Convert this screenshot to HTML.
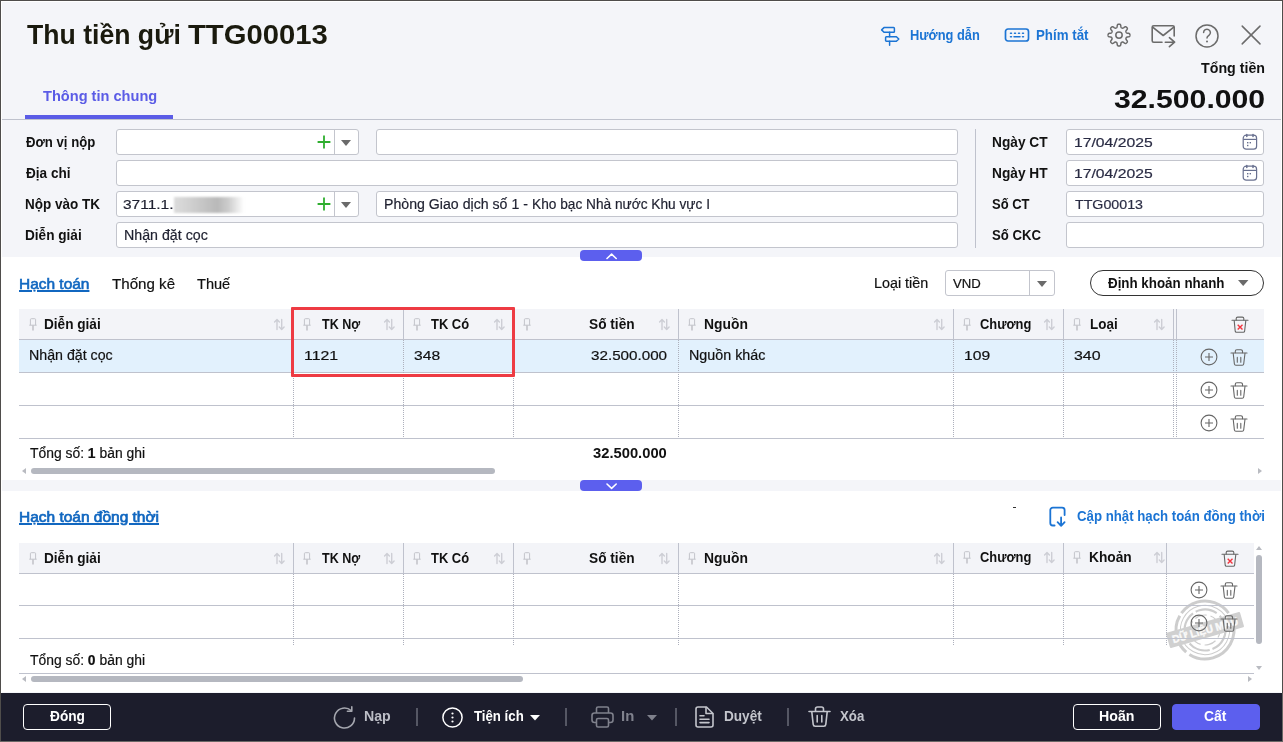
<!DOCTYPE html>
<html lang="vi">
<head>
<meta charset="utf-8">
<title>Thu tiền gửi TTG00013</title>
<style>
*{box-sizing:border-box;margin:0;padding:0}
html,body{width:1283px;height:742px;overflow:hidden}
body{font-family:"Liberation Sans","DejaVu Sans",sans-serif;font-size:14px;color:#111;background:#f4f5f9;position:relative}
.a{position:absolute}
.t{position:absolute;white-space:nowrap;line-height:18px;font-size:14px;color:#111;transform-origin:0 0}
.b{font-weight:bold}
.inp{position:absolute;background:#fff;border:1px solid #c3c5cd;border-radius:3px;height:26px}
.panel{position:absolute;background:#fff;left:2px;width:1279px}
.handle{position:absolute;left:580px;width:62px;height:11px;background:#5c5fee;border-radius:4px}


.vd{position:absolute;width:1px;background-image:linear-gradient(to bottom,#adb0bc 50%,transparent 50%);background-size:1px 2px}
.btn{position:absolute;height:26px;border-radius:4px;font-weight:bold;font-size:14px;line-height:24px;text-align:center;color:#fff;border:1px solid #fff}
svg{position:absolute;overflow:visible}
</style>
</head>
<body>
<div class="a" style="left:25px;top:115px;width:148px;height:4px;background:#5b5ce6;"></div>
<div class="a" style="left:1px;top:119px;width:1281px;height:1px;background:#bfc2cd;"></div>
<svg style="left:880px;top:25px" width="21" height="22" viewBox="0 0 21 22" fill="none"><g stroke="#1b74d4" stroke-width="1.5" stroke-linejoin="round" stroke-linecap="round"><path d="M4 2.6H13.6a.8 .8 0 0 1 .8 .8V6.4a.8 .8 0 0 1-.8 .8H4L1.6 4.9Z"/><path d="M9.6 7.2V11.7M9.6 16.3V20.3"/><path d="M6.4 11.7H16.4L18.8 14L16.4 16.3H6.4a.8 .8 0 0 1-.8-.8V12.5a.8 .8 0 0 1 .8-.8Z"/></g></svg>
<svg style="left:1004px;top:28px" width="26" height="14" viewBox="0 0 26 14" fill="none"><g stroke="#1b74d4" stroke-width="1.7" stroke-linecap="round"><rect x="1.5" y="1" width="23" height="12" rx="2.5"/><path d="M6.5 5.2h1M10.5 5.2h1M14.5 5.2h1M18.5 5.2h1M6.5 8.8h1M10 8.8h6M18.5 8.8h1" stroke-width="1.5"/></g></svg>
<svg style="left:1107px;top:23px" width="25" height="25" viewBox="0 0 25 25" fill="none"><path d="M12.00 1.20 L12.29 1.21 L12.57 1.24 L12.85 1.30 L13.12 1.41 L13.38 1.63 L13.60 2.01 L13.76 2.62 L13.86 3.34 L13.96 3.94 L14.08 4.34 L14.23 4.57 L14.40 4.71 L14.58 4.82 L14.76 4.91 L14.95 4.99 L15.13 5.06 L15.33 5.13 L15.53 5.18 L15.75 5.20 L16.02 5.14 L16.38 4.95 L16.88 4.59 L17.46 4.15 L18.00 3.84 L18.43 3.72 L18.76 3.75 L19.04 3.86 L19.28 4.02 L19.50 4.20 L19.71 4.39 L19.90 4.60 L20.08 4.82 L20.24 5.06 L20.35 5.34 L20.38 5.67 L20.26 6.10 L19.95 6.64 L19.51 7.22 L19.15 7.72 L18.96 8.08 L18.90 8.35 L18.92 8.57 L18.97 8.77 L19.04 8.97 L19.11 9.15 L19.19 9.34 L19.28 9.52 L19.39 9.70 L19.53 9.87 L19.76 10.02 L20.16 10.14 L20.76 10.24 L21.48 10.34 L22.09 10.50 L22.47 10.72 L22.69 10.98 L22.80 11.25 L22.86 11.53 L22.89 11.81 L22.90 12.10 L22.89 12.39 L22.86 12.67 L22.80 12.95 L22.69 13.22 L22.47 13.48 L22.09 13.70 L21.48 13.86 L20.76 13.96 L20.16 14.06 L19.76 14.18 L19.53 14.33 L19.39 14.50 L19.28 14.68 L19.19 14.86 L19.11 15.05 L19.04 15.23 L18.97 15.43 L18.92 15.63 L18.90 15.85 L18.96 16.12 L19.15 16.48 L19.51 16.98 L19.95 17.56 L20.26 18.10 L20.38 18.53 L20.35 18.86 L20.24 19.14 L20.08 19.38 L19.90 19.60 L19.71 19.81 L19.50 20.00 L19.28 20.18 L19.04 20.34 L18.76 20.45 L18.43 20.48 L18.00 20.36 L17.46 20.05 L16.88 19.61 L16.38 19.25 L16.02 19.06 L15.75 19.00 L15.53 19.02 L15.33 19.07 L15.13 19.14 L14.95 19.21 L14.76 19.29 L14.58 19.38 L14.40 19.49 L14.23 19.63 L14.08 19.86 L13.96 20.26 L13.86 20.86 L13.76 21.58 L13.60 22.19 L13.38 22.57 L13.12 22.79 L12.85 22.90 L12.57 22.96 L12.29 22.99 L12.00 23.00 L11.71 22.99 L11.43 22.96 L11.15 22.90 L10.88 22.79 L10.62 22.57 L10.40 22.19 L10.24 21.58 L10.14 20.86 L10.04 20.26 L9.92 19.86 L9.77 19.63 L9.60 19.49 L9.42 19.38 L9.24 19.29 L9.05 19.21 L8.87 19.14 L8.67 19.07 L8.47 19.02 L8.25 19.00 L7.98 19.06 L7.62 19.25 L7.12 19.61 L6.54 20.05 L6.00 20.36 L5.57 20.48 L5.24 20.45 L4.96 20.34 L4.72 20.18 L4.50 20.00 L4.29 19.81 L4.10 19.60 L3.92 19.38 L3.76 19.14 L3.65 18.86 L3.62 18.53 L3.74 18.10 L4.05 17.56 L4.49 16.98 L4.85 16.48 L5.04 16.12 L5.10 15.85 L5.08 15.63 L5.03 15.43 L4.96 15.23 L4.89 15.05 L4.81 14.86 L4.72 14.68 L4.61 14.50 L4.47 14.33 L4.24 14.18 L3.84 14.06 L3.24 13.96 L2.52 13.86 L1.91 13.70 L1.53 13.48 L1.31 13.22 L1.20 12.95 L1.14 12.67 L1.11 12.39 L1.10 12.10 L1.11 11.81 L1.14 11.53 L1.20 11.25 L1.31 10.98 L1.53 10.72 L1.91 10.50 L2.52 10.34 L3.24 10.24 L3.84 10.14 L4.24 10.02 L4.47 9.87 L4.61 9.70 L4.72 9.52 L4.81 9.34 L4.89 9.15 L4.96 8.97 L5.03 8.77 L5.08 8.57 L5.10 8.35 L5.04 8.08 L4.85 7.72 L4.49 7.22 L4.05 6.64 L3.74 6.10 L3.62 5.67 L3.65 5.34 L3.76 5.06 L3.92 4.82 L4.10 4.60 L4.29 4.39 L4.50 4.20 L4.72 4.02 L4.96 3.86 L5.24 3.75 L5.57 3.72 L6.00 3.84 L6.54 4.15 L7.12 4.59 L7.62 4.95 L7.98 5.14 L8.25 5.20 L8.47 5.18 L8.67 5.13 L8.87 5.06 L9.05 4.99 L9.24 4.91 L9.42 4.82 L9.60 4.71 L9.77 4.57 L9.92 4.34 L10.04 3.94 L10.14 3.34 L10.24 2.62 L10.40 2.01 L10.62 1.63 L10.88 1.41 L11.15 1.30 L11.43 1.24 L11.71 1.21Z" stroke="#6b6b6b" stroke-width="1.5" stroke-linejoin="round"/><circle cx="12" cy="12.1" r="3.2" stroke="#6b6b6b" stroke-width="1.5"/></svg>
<svg style="left:1151px;top:24px" width="26" height="24" viewBox="0 0 26 24" fill="none"><g stroke="#6b6b6b" stroke-width="1.6" stroke-linejoin="round" stroke-linecap="round"><path d="M11 18.2H2.7a1.5 1.5 0 0 1-1.5-1.5V3.3a1.5 1.5 0 0 1 1.5-1.5H21.7a1.5 1.5 0 0 1 1.5 1.5V11.9"/><path d="M1.6 3.2L12.2 11.5L22.8 3.2"/><path d="M14.3 18.2H23.6M18.4 13.7L23.6 18.2L18.4 22.7"/></g></svg>
<svg style="left:1195px;top:24px" width="25" height="25" viewBox="0 0 25 25" fill="none"><circle cx="12" cy="11.9" r="11" stroke="#6b6b6b" stroke-width="1.5"/><path d="M8.6 8.6a3.4 3.4 0 1 1 5.3 2.8c-1.4 .9-1.9 1.4-1.9 2.5" stroke="#6b6b6b" stroke-width="1.5" stroke-linecap="round"/><circle cx="12" cy="17.5" r="1" fill="#6b6b6b"/></svg>
<svg style="left:1241px;top:25px" width="21" height="21" viewBox="0 0 21 21" fill="none"><path d="M1.2 1.1L19 18.9M19 1.1L1.2 18.9" stroke="#6b6b6b" stroke-width="1.5" stroke-linecap="round"/></svg>
<div class="inp" style="left:116px;top:129px;width:243px"></div>
<div class="inp" style="left:376px;top:129px;width:582px"></div>
<div class="inp" style="left:116px;top:160px;width:842px"></div>
<div class="inp" style="left:116px;top:191px;width:243px"></div>
<div class="inp" style="left:376px;top:191px;width:582px"></div>
<div class="inp" style="left:116px;top:222px;width:842px"></div>
<div class="inp" style="left:1066px;top:129px;width:198px"></div>
<div class="inp" style="left:1066px;top:160px;width:198px"></div>
<div class="inp" style="left:1066px;top:191px;width:198px"></div>
<div class="inp" style="left:1066px;top:222px;width:198px"></div>
<div class="a" style="left:975px;top:129px;width:1px;height:119px;background:#bfc2cd;"></div>
<div class="a" style="left:174px;top:197px;width:70px;height:16px;background:linear-gradient(to right,#dcdcdc,#cfcfcf 25%,#b9b9b9 62%,#cdcdcd 78%,rgba(235,235,235,0));filter:blur(1.2px)"></div>
<div class="a" style="left:334px;top:130px;width:1px;height:24px;background:#c3c5cd;"></div>
<svg style="left:317px;top:135px" width="14" height="14" viewBox="0 0 14 14" fill="none"><path d="M7 .6v12.8M.6 7h12.8" stroke="#2fae2f" stroke-width="1.8"/></svg>
<svg style="left:341px;top:140px" width="10" height="6" viewBox="0 0 10 6" fill="none"><path d="M0 0h10l-5 6z" fill="#6a6a6a"/></svg>
<div class="a" style="left:334px;top:192px;width:1px;height:24px;background:#c3c5cd;"></div>
<svg style="left:317px;top:197px" width="14" height="14" viewBox="0 0 14 14" fill="none"><path d="M7 .6v12.8M.6 7h12.8" stroke="#2fae2f" stroke-width="1.8"/></svg>
<svg style="left:341px;top:202px" width="10" height="6" viewBox="0 0 10 6" fill="none"><path d="M0 0h10l-5 6z" fill="#6a6a6a"/></svg>
<svg style="left:1242px;top:133px" width="16" height="17" viewBox="0 0 16 17" fill="none"><g stroke="#68708f" stroke-width="1.2"><rect x="1.2" y="2.2" width="13.4" height="14" rx="3"/><path d="M1.2 6.4h13.4"/><path d="M4.8 1.6v1.8M11 1.6v1.8" stroke-linecap="round" stroke-width="1.5"/></g><rect x="5" y="9" width="1.4" height="1.4" fill="#68708f"/><rect x="7.6" y="9" width="1.4" height="1.4" fill="#68708f"/><rect x="5" y="11.8" width="1.4" height="1.4" fill="#68708f"/></svg>
<svg style="left:1242px;top:164px" width="16" height="17" viewBox="0 0 16 17" fill="none"><g stroke="#68708f" stroke-width="1.2"><rect x="1.2" y="2.2" width="13.4" height="14" rx="3"/><path d="M1.2 6.4h13.4"/><path d="M4.8 1.6v1.8M11 1.6v1.8" stroke-linecap="round" stroke-width="1.5"/></g><rect x="5" y="9" width="1.4" height="1.4" fill="#68708f"/><rect x="7.6" y="9" width="1.4" height="1.4" fill="#68708f"/><rect x="5" y="11.8" width="1.4" height="1.4" fill="#68708f"/></svg>
<div class="panel" style="top:257px;height:223px"></div>
<div class="handle" style="top:250px"></div>
<svg style="left:606px;top:252.6px" width="11" height="7" viewBox="0 0 11 7" fill="none"><path d="M1 5.5l4.6-4.3 4.6 4.3" stroke="#fff" stroke-width="1.6" stroke-linecap="round" stroke-linejoin="round"/></svg>
<div class="inp" style="left:945px;top:270px;width:110px"></div>
<div class="a" style="left:1029px;top:271px;width:1px;height:24px;background:#c3c5cd;"></div>
<svg style="left:1037px;top:281px" width="10" height="6" viewBox="0 0 10 6" fill="none"><path d="M0 0h10l-5 6z" fill="#6a6a6a"/></svg>
<div class="a" style="left:1090px;top:270px;width:174px;height:26px;border:1px solid #333;border-radius:13px;background:#fff"></div>
<svg style="left:1238px;top:280px" width="10" height="6" viewBox="0 0 10 6" fill="none"><path d="M0 0h10.4l-5.2 6z" fill="#6a6a6a"/></svg>
<div class="a" style="left:19px;top:309px;width:1245px;height:30px;background:#f3f4f8;"></div>
<div class="a" style="left:19px;top:339px;width:1245px;height:1px;background:#bfc2cd;"></div>
<svg style="left:29px;top:318px" width="8" height="13" viewBox="0 0 8 13" fill="none"><g stroke="#c3c4ca" stroke-width="1"><path d="M1.4 7.2V1.6a.9 .9 0 0 1 .9-.9h3.4a.9 .9 0 0 1 .9 .9V7.2"/><path d="M.3 7.2H7.7"/><path d="M4 7.2V12.5" stroke-width="1.6"/></g></svg>
<svg style="left:274px;top:319px" width="11" height="11" viewBox="0 0 11 11" fill="none"><g stroke="#cdced5" stroke-width="1.4" stroke-linecap="round" stroke-linejoin="round"><path d="M3 10.5V.7M.6 3L3 .6L5.4 3"/><path d="M7.7 .5V10.4M5.3 8L7.7 10.4L10.1 8"/></g></svg>
<svg style="left:303px;top:318px" width="8" height="13" viewBox="0 0 8 13" fill="none"><g stroke="#c3c4ca" stroke-width="1"><path d="M1.4 7.2V1.6a.9 .9 0 0 1 .9-.9h3.4a.9 .9 0 0 1 .9 .9V7.2"/><path d="M.3 7.2H7.7"/><path d="M4 7.2V12.5" stroke-width="1.6"/></g></svg>
<svg style="left:384px;top:319px" width="11" height="11" viewBox="0 0 11 11" fill="none"><g stroke="#cdced5" stroke-width="1.4" stroke-linecap="round" stroke-linejoin="round"><path d="M3 10.5V.7M.6 3L3 .6L5.4 3"/><path d="M7.7 .5V10.4M5.3 8L7.7 10.4L10.1 8"/></g></svg>
<div class="a" style="left:293px;top:309px;width:1px;height:30px;background:#bfc2cd;"></div>
<svg style="left:413px;top:318px" width="8" height="13" viewBox="0 0 8 13" fill="none"><g stroke="#c3c4ca" stroke-width="1"><path d="M1.4 7.2V1.6a.9 .9 0 0 1 .9-.9h3.4a.9 .9 0 0 1 .9 .9V7.2"/><path d="M.3 7.2H7.7"/><path d="M4 7.2V12.5" stroke-width="1.6"/></g></svg>
<svg style="left:494px;top:319px" width="11" height="11" viewBox="0 0 11 11" fill="none"><g stroke="#cdced5" stroke-width="1.4" stroke-linecap="round" stroke-linejoin="round"><path d="M3 10.5V.7M.6 3L3 .6L5.4 3"/><path d="M7.7 .5V10.4M5.3 8L7.7 10.4L10.1 8"/></g></svg>
<div class="a" style="left:403px;top:309px;width:1px;height:30px;background:#bfc2cd;"></div>
<svg style="left:523px;top:318px" width="8" height="13" viewBox="0 0 8 13" fill="none"><g stroke="#c3c4ca" stroke-width="1"><path d="M1.4 7.2V1.6a.9 .9 0 0 1 .9-.9h3.4a.9 .9 0 0 1 .9 .9V7.2"/><path d="M.3 7.2H7.7"/><path d="M4 7.2V12.5" stroke-width="1.6"/></g></svg>
<svg style="left:659px;top:319px" width="11" height="11" viewBox="0 0 11 11" fill="none"><g stroke="#cdced5" stroke-width="1.4" stroke-linecap="round" stroke-linejoin="round"><path d="M3 10.5V.7M.6 3L3 .6L5.4 3"/><path d="M7.7 .5V10.4M5.3 8L7.7 10.4L10.1 8"/></g></svg>
<div class="a" style="left:513px;top:309px;width:1px;height:30px;background:#bfc2cd;"></div>
<svg style="left:688px;top:318px" width="8" height="13" viewBox="0 0 8 13" fill="none"><g stroke="#c3c4ca" stroke-width="1"><path d="M1.4 7.2V1.6a.9 .9 0 0 1 .9-.9h3.4a.9 .9 0 0 1 .9 .9V7.2"/><path d="M.3 7.2H7.7"/><path d="M4 7.2V12.5" stroke-width="1.6"/></g></svg>
<svg style="left:934px;top:319px" width="11" height="11" viewBox="0 0 11 11" fill="none"><g stroke="#cdced5" stroke-width="1.4" stroke-linecap="round" stroke-linejoin="round"><path d="M3 10.5V.7M.6 3L3 .6L5.4 3"/><path d="M7.7 .5V10.4M5.3 8L7.7 10.4L10.1 8"/></g></svg>
<div class="a" style="left:678px;top:309px;width:1px;height:30px;background:#bfc2cd;"></div>
<svg style="left:963px;top:318px" width="8" height="13" viewBox="0 0 8 13" fill="none"><g stroke="#c3c4ca" stroke-width="1"><path d="M1.4 7.2V1.6a.9 .9 0 0 1 .9-.9h3.4a.9 .9 0 0 1 .9 .9V7.2"/><path d="M.3 7.2H7.7"/><path d="M4 7.2V12.5" stroke-width="1.6"/></g></svg>
<svg style="left:1044px;top:319px" width="11" height="11" viewBox="0 0 11 11" fill="none"><g stroke="#cdced5" stroke-width="1.4" stroke-linecap="round" stroke-linejoin="round"><path d="M3 10.5V.7M.6 3L3 .6L5.4 3"/><path d="M7.7 .5V10.4M5.3 8L7.7 10.4L10.1 8"/></g></svg>
<div class="a" style="left:953px;top:309px;width:1px;height:30px;background:#bfc2cd;"></div>
<svg style="left:1073px;top:318px" width="8" height="13" viewBox="0 0 8 13" fill="none"><g stroke="#c3c4ca" stroke-width="1"><path d="M1.4 7.2V1.6a.9 .9 0 0 1 .9-.9h3.4a.9 .9 0 0 1 .9 .9V7.2"/><path d="M.3 7.2H7.7"/><path d="M4 7.2V12.5" stroke-width="1.6"/></g></svg>
<svg style="left:1154px;top:319px" width="11" height="11" viewBox="0 0 11 11" fill="none"><g stroke="#cdced5" stroke-width="1.4" stroke-linecap="round" stroke-linejoin="round"><path d="M3 10.5V.7M.6 3L3 .6L5.4 3"/><path d="M7.7 .5V10.4M5.3 8L7.7 10.4L10.1 8"/></g></svg>
<div class="a" style="left:1063px;top:309px;width:1px;height:30px;background:#bfc2cd;"></div>
<div class="a" style="left:1173px;top:309px;width:1px;height:30px;background:#bfc2cd;"></div>
<div class="a" style="left:1176px;top:309px;width:1px;height:30px;background:#bfc2cd;"></div>
<div class="a" style="left:19px;top:340px;width:1245px;height:32px;background:#e2f1fd;"></div>
<div class="a" style="left:19px;top:372px;width:1245px;height:1px;background:#bfc2cd;"></div>
<div class="a" style="left:19px;top:405px;width:1245px;height:1px;background:#bfc2cd;"></div>
<div class="a" style="left:19px;top:438px;width:1245px;height:1px;background:#bfc2cd;"></div>
<div class="vd" style="left:293px;top:340px;height:98px"></div>
<div class="vd" style="left:403px;top:340px;height:98px"></div>
<div class="vd" style="left:513px;top:340px;height:98px"></div>
<div class="vd" style="left:678px;top:340px;height:98px"></div>
<div class="vd" style="left:953px;top:340px;height:98px"></div>
<div class="vd" style="left:1063px;top:340px;height:98px"></div>
<div class="vd" style="left:1173px;top:340px;height:98px"></div>
<div class="vd" style="left:1176px;top:340px;height:98px"></div>
<svg style="left:1231px;top:316px" width="18" height="17" viewBox="0 0 18 17" fill="none"><g stroke="#666" stroke-width="1.1" stroke-linecap="round" stroke-linejoin="round"><path d="M1 4.3H17"/><path d="M5.2 4.1V2.6a1.5 1.5 0 0 1 1.5-1.5h4.6a1.5 1.5 0 0 1 1.5 1.5V4.1"/><path d="M3.2 4.6L4.2 15.2a1.3 1.3 0 0 0 1.3 1.1h6.8a1.3 1.3 0 0 0 1.3-1.1L14.8 4.6"/></g><path d="M6.7 8.7l4.8 4.8M11.5 8.7l-4.8 4.8" stroke="#f2353f" stroke-width="1.4"/></svg>
<svg style="left:1199.5px;top:348px" width="18" height="18" viewBox="0 0 18 18" fill="none"><circle cx="9" cy="9" r="7.9" stroke="#666" stroke-width="1.1"/><path d="M9 5v8M5 9h8" stroke="#666" stroke-width="1.1"/></svg>
<svg style="left:1230px;top:348.5px" width="18" height="17" viewBox="0 0 18 17" fill="none"><g stroke="#666" stroke-width="1.1" stroke-linecap="round" stroke-linejoin="round"><path d="M1 4H17"/><path d="M5.3 3.8V2.3a1.5 1.5 0 0 1 1.5-1.5h4.2a1.5 1.5 0 0 1 1.5 1.5V3.8"/><path d="M3.2 4.3L4.4 15a1.5 1.5 0 0 0 1.5 1.3h6.3a1.5 1.5 0 0 0 1.5-1.3L15 4.3"/><path d="M7.3 8.4v4.8M10.8 8.4v4.8"/></g></svg>
<svg style="left:1199.5px;top:381px" width="18" height="18" viewBox="0 0 18 18" fill="none"><circle cx="9" cy="9" r="7.9" stroke="#666" stroke-width="1.1"/><path d="M9 5v8M5 9h8" stroke="#666" stroke-width="1.1"/></svg>
<svg style="left:1230px;top:381.5px" width="18" height="17" viewBox="0 0 18 17" fill="none"><g stroke="#666" stroke-width="1.1" stroke-linecap="round" stroke-linejoin="round"><path d="M1 4H17"/><path d="M5.3 3.8V2.3a1.5 1.5 0 0 1 1.5-1.5h4.2a1.5 1.5 0 0 1 1.5 1.5V3.8"/><path d="M3.2 4.3L4.4 15a1.5 1.5 0 0 0 1.5 1.3h6.3a1.5 1.5 0 0 0 1.5-1.3L15 4.3"/><path d="M7.3 8.4v4.8M10.8 8.4v4.8"/></g></svg>
<svg style="left:1199.5px;top:414px" width="18" height="18" viewBox="0 0 18 18" fill="none"><circle cx="9" cy="9" r="7.9" stroke="#666" stroke-width="1.1"/><path d="M9 5v8M5 9h8" stroke="#666" stroke-width="1.1"/></svg>
<svg style="left:1230px;top:414.5px" width="18" height="17" viewBox="0 0 18 17" fill="none"><g stroke="#666" stroke-width="1.1" stroke-linecap="round" stroke-linejoin="round"><path d="M1 4H17"/><path d="M5.3 3.8V2.3a1.5 1.5 0 0 1 1.5-1.5h4.2a1.5 1.5 0 0 1 1.5 1.5V3.8"/><path d="M3.2 4.3L4.4 15a1.5 1.5 0 0 0 1.5 1.3h6.3a1.5 1.5 0 0 0 1.5-1.3L15 4.3"/><path d="M7.3 8.4v4.8M10.8 8.4v4.8"/></g></svg>
<div class="a" style="left:31px;top:468px;width:464px;height:6px;background:#b5b8c0;border-radius:3px"></div>
<svg style="left:22px;top:468px" width="4" height="6" viewBox="0 0 4 6" fill="none"><path d="M4 0v6l-4-3z" fill="#b9bbc1"/></svg>
<svg style="left:1258px;top:468px" width="4" height="6" viewBox="0 0 4 6" fill="none"><path d="M0 0v6l4-3z" fill="#b9bbc1"/></svg>
<div class="a" style="left:291px;top:307px;width:224px;height:70px;border:3px solid #ee3b43;border-radius:1px"></div>
<div class="handle" style="top:480px"></div>
<svg style="left:606px;top:483px" width="11" height="7" viewBox="0 0 11 7" fill="none"><path d="M1 1l4.6 4.3 4.6-4.3" stroke="#fff" stroke-width="1.6" stroke-linecap="round" stroke-linejoin="round"/></svg>
<div class="panel" style="top:491px;height:201px"></div>
<svg style="left:1165px;top:590px" width="80" height="80" viewBox="-40 -40 80 80" fill="none"><g transform="rotate(-16)"><circle r="29" stroke="#cdcdcd" stroke-width="3" stroke-dasharray="70 4 40 3 55 5"/><circle r="24.6" stroke="#cdcdcd" stroke-width="1"/><circle r="20.5" stroke="#cdcdcd" stroke-width="2.2" stroke-dasharray="30 3 22 4"/><circle r="15" stroke="#cdcdcd" stroke-width="1.2" stroke-dasharray="12 4"/><rect x="-38.5" y="-8" width="77" height="16" rx="1" fill="#d0d0d0"/><text x="0" y="4" text-anchor="middle" font-family="Liberation Sans, sans-serif" font-weight="bold" font-size="11" fill="#fafafa" stroke="#fafafa" stroke-width="0.4" textLength="68" lengthAdjust="spacingAndGlyphs">DỮ LIỆU MẪU</text></g></svg>
<svg style="left:1048px;top:506px" width="19" height="22" viewBox="0 0 19 22" fill="none"><g stroke="#1b74d4" stroke-width="1.8" stroke-linecap="round" stroke-linejoin="round"><path d="M6.6 19.5H4.8a2.5 2.5 0 0 1-2.5-2.5V4.1a2.5 2.5 0 0 1 2.5-2.5H14.1a2.5 2.5 0 0 1 2.5 2.5V9.1"/><path d="M13.1 11.5V19.8M9.6 16.2L13.1 19.8L16.6 16.2"/></g></svg>
<div class="a" style="left:1013px;top:507px;width:3px;height:1px;background:#333;"></div>
<div class="a" style="left:19px;top:543px;width:1235px;height:30px;background:#f3f4f8;"></div>
<div class="a" style="left:19px;top:573px;width:1235px;height:1px;background:#bfc2cd;"></div>
<svg style="left:29px;top:552px" width="8" height="13" viewBox="0 0 8 13" fill="none"><g stroke="#c3c4ca" stroke-width="1"><path d="M1.4 7.2V1.6a.9 .9 0 0 1 .9-.9h3.4a.9 .9 0 0 1 .9 .9V7.2"/><path d="M.3 7.2H7.7"/><path d="M4 7.2V12.5" stroke-width="1.6"/></g></svg>
<svg style="left:274px;top:553px" width="11" height="11" viewBox="0 0 11 11" fill="none"><g stroke="#cdced5" stroke-width="1.4" stroke-linecap="round" stroke-linejoin="round"><path d="M3 10.5V.7M.6 3L3 .6L5.4 3"/><path d="M7.7 .5V10.4M5.3 8L7.7 10.4L10.1 8"/></g></svg>
<svg style="left:303px;top:552px" width="8" height="13" viewBox="0 0 8 13" fill="none"><g stroke="#c3c4ca" stroke-width="1"><path d="M1.4 7.2V1.6a.9 .9 0 0 1 .9-.9h3.4a.9 .9 0 0 1 .9 .9V7.2"/><path d="M.3 7.2H7.7"/><path d="M4 7.2V12.5" stroke-width="1.6"/></g></svg>
<svg style="left:384px;top:553px" width="11" height="11" viewBox="0 0 11 11" fill="none"><g stroke="#cdced5" stroke-width="1.4" stroke-linecap="round" stroke-linejoin="round"><path d="M3 10.5V.7M.6 3L3 .6L5.4 3"/><path d="M7.7 .5V10.4M5.3 8L7.7 10.4L10.1 8"/></g></svg>
<div class="a" style="left:293px;top:543px;width:1px;height:30px;background:#bfc2cd;"></div>
<svg style="left:413px;top:552px" width="8" height="13" viewBox="0 0 8 13" fill="none"><g stroke="#c3c4ca" stroke-width="1"><path d="M1.4 7.2V1.6a.9 .9 0 0 1 .9-.9h3.4a.9 .9 0 0 1 .9 .9V7.2"/><path d="M.3 7.2H7.7"/><path d="M4 7.2V12.5" stroke-width="1.6"/></g></svg>
<svg style="left:494px;top:553px" width="11" height="11" viewBox="0 0 11 11" fill="none"><g stroke="#cdced5" stroke-width="1.4" stroke-linecap="round" stroke-linejoin="round"><path d="M3 10.5V.7M.6 3L3 .6L5.4 3"/><path d="M7.7 .5V10.4M5.3 8L7.7 10.4L10.1 8"/></g></svg>
<div class="a" style="left:403px;top:543px;width:1px;height:30px;background:#bfc2cd;"></div>
<svg style="left:523px;top:552px" width="8" height="13" viewBox="0 0 8 13" fill="none"><g stroke="#c3c4ca" stroke-width="1"><path d="M1.4 7.2V1.6a.9 .9 0 0 1 .9-.9h3.4a.9 .9 0 0 1 .9 .9V7.2"/><path d="M.3 7.2H7.7"/><path d="M4 7.2V12.5" stroke-width="1.6"/></g></svg>
<svg style="left:659px;top:553px" width="11" height="11" viewBox="0 0 11 11" fill="none"><g stroke="#cdced5" stroke-width="1.4" stroke-linecap="round" stroke-linejoin="round"><path d="M3 10.5V.7M.6 3L3 .6L5.4 3"/><path d="M7.7 .5V10.4M5.3 8L7.7 10.4L10.1 8"/></g></svg>
<div class="a" style="left:513px;top:543px;width:1px;height:30px;background:#bfc2cd;"></div>
<svg style="left:688px;top:552px" width="8" height="13" viewBox="0 0 8 13" fill="none"><g stroke="#c3c4ca" stroke-width="1"><path d="M1.4 7.2V1.6a.9 .9 0 0 1 .9-.9h3.4a.9 .9 0 0 1 .9 .9V7.2"/><path d="M.3 7.2H7.7"/><path d="M4 7.2V12.5" stroke-width="1.6"/></g></svg>
<svg style="left:934px;top:553px" width="11" height="11" viewBox="0 0 11 11" fill="none"><g stroke="#cdced5" stroke-width="1.4" stroke-linecap="round" stroke-linejoin="round"><path d="M3 10.5V.7M.6 3L3 .6L5.4 3"/><path d="M7.7 .5V10.4M5.3 8L7.7 10.4L10.1 8"/></g></svg>
<div class="a" style="left:678px;top:543px;width:1px;height:30px;background:#bfc2cd;"></div>
<svg style="left:963px;top:550.8px" width="8" height="13" viewBox="0 0 8 13" fill="none"><g stroke="#c3c4ca" stroke-width="1"><path d="M1.4 7.2V1.6a.9 .9 0 0 1 .9-.9h3.4a.9 .9 0 0 1 .9 .9V7.2"/><path d="M.3 7.2H7.7"/><path d="M4 7.2V12.5" stroke-width="1.6"/></g></svg>
<svg style="left:1044px;top:551.8px" width="11" height="11" viewBox="0 0 11 11" fill="none"><g stroke="#cdced5" stroke-width="1.4" stroke-linecap="round" stroke-linejoin="round"><path d="M3 10.5V.7M.6 3L3 .6L5.4 3"/><path d="M7.7 .5V10.4M5.3 8L7.7 10.4L10.1 8"/></g></svg>
<div class="a" style="left:953px;top:543px;width:1px;height:30px;background:#bfc2cd;"></div>
<svg style="left:1073px;top:550.8px" width="8" height="13" viewBox="0 0 8 13" fill="none"><g stroke="#c3c4ca" stroke-width="1"><path d="M1.4 7.2V1.6a.9 .9 0 0 1 .9-.9h3.4a.9 .9 0 0 1 .9 .9V7.2"/><path d="M.3 7.2H7.7"/><path d="M4 7.2V12.5" stroke-width="1.6"/></g></svg>
<svg style="left:1154px;top:551.8px" width="11" height="11" viewBox="0 0 11 11" fill="none"><g stroke="#cdced5" stroke-width="1.4" stroke-linecap="round" stroke-linejoin="round"><path d="M3 10.5V.7M.6 3L3 .6L5.4 3"/><path d="M7.7 .5V10.4M5.3 8L7.7 10.4L10.1 8"/></g></svg>
<div class="a" style="left:1063px;top:543px;width:1px;height:30px;background:#bfc2cd;"></div>
<div class="a" style="left:1166px;top:543px;width:1px;height:30px;background:#bfc2cd;"></div>
<div class="a" style="left:19px;top:605px;width:1235px;height:1px;background:#bfc2cd;"></div>
<div class="a" style="left:19px;top:638px;width:1235px;height:1px;background:#bfc2cd;"></div>
<div class="a" style="left:19px;top:673px;width:1235px;height:1px;background:#bfc2cd;"></div>
<div class="vd" style="left:293px;top:574px;height:72px"></div>
<div class="vd" style="left:403px;top:574px;height:72px"></div>
<div class="vd" style="left:513px;top:574px;height:72px"></div>
<div class="vd" style="left:678px;top:574px;height:72px"></div>
<div class="vd" style="left:953px;top:574px;height:72px"></div>
<div class="vd" style="left:1063px;top:574px;height:72px"></div>
<div class="vd" style="left:1166px;top:574px;height:72px"></div>
<svg style="left:1221px;top:550px" width="18" height="17" viewBox="0 0 18 17" fill="none"><g stroke="#666" stroke-width="1.1" stroke-linecap="round" stroke-linejoin="round"><path d="M1 4.3H17"/><path d="M5.2 4.1V2.6a1.5 1.5 0 0 1 1.5-1.5h4.6a1.5 1.5 0 0 1 1.5 1.5V4.1"/><path d="M3.2 4.6L4.2 15.2a1.3 1.3 0 0 0 1.3 1.1h6.8a1.3 1.3 0 0 0 1.3-1.1L14.8 4.6"/></g><path d="M6.7 8.7l4.8 4.8M11.5 8.7l-4.8 4.8" stroke="#f2353f" stroke-width="1.4"/></svg>
<svg style="left:1189.5px;top:581px" width="18" height="18" viewBox="0 0 18 18" fill="none"><circle cx="9" cy="9" r="7.9" stroke="#666" stroke-width="1.1"/><path d="M9 5v8M5 9h8" stroke="#666" stroke-width="1.1"/></svg>
<svg style="left:1220px;top:581.5px" width="18" height="17" viewBox="0 0 18 17" fill="none"><g stroke="#666" stroke-width="1.1" stroke-linecap="round" stroke-linejoin="round"><path d="M1 4H17"/><path d="M5.3 3.8V2.3a1.5 1.5 0 0 1 1.5-1.5h4.2a1.5 1.5 0 0 1 1.5 1.5V3.8"/><path d="M3.2 4.3L4.4 15a1.5 1.5 0 0 0 1.5 1.3h6.3a1.5 1.5 0 0 0 1.5-1.3L15 4.3"/><path d="M7.3 8.4v4.8M10.8 8.4v4.8"/></g></svg>
<svg style="left:1189.5px;top:614px" width="18" height="18" viewBox="0 0 18 18" fill="none"><circle cx="9" cy="9" r="7.9" stroke="#666" stroke-width="1.1"/><path d="M9 5v8M5 9h8" stroke="#666" stroke-width="1.1"/></svg>
<svg style="left:1220px;top:614.5px" width="18" height="17" viewBox="0 0 18 17" fill="none"><g stroke="#666" stroke-width="1.1" stroke-linecap="round" stroke-linejoin="round"><path d="M1 4H17"/><path d="M5.3 3.8V2.3a1.5 1.5 0 0 1 1.5-1.5h4.2a1.5 1.5 0 0 1 1.5 1.5V3.8"/><path d="M3.2 4.3L4.4 15a1.5 1.5 0 0 0 1.5 1.3h6.3a1.5 1.5 0 0 0 1.5-1.3L15 4.3"/><path d="M7.3 8.4v4.8M10.8 8.4v4.8"/></g></svg>
<div class="a" style="left:31px;top:676px;width:492px;height:6px;background:#b5b8c0;border-radius:3px"></div>
<svg style="left:22px;top:676px" width="4" height="6" viewBox="0 0 4 6" fill="none"><path d="M4 0v6l-4-3z" fill="#b9bbc1"/></svg>
<svg style="left:1248px;top:676px" width="4" height="6" viewBox="0 0 4 6" fill="none"><path d="M0 0v6l4-3z" fill="#b9bbc1"/></svg>
<div class="a" style="left:1256px;top:555px;width:6px;height:89px;background:#b5b8c0;border-radius:3px"></div>
<svg style="left:1256px;top:546px" width="6" height="4" viewBox="0 0 6 4" fill="none"><path d="M0 4h6l-3-4z" fill="#b9bbc1"/></svg>
<svg style="left:1256px;top:666px" width="6" height="4" viewBox="0 0 6 4" fill="none"><path d="M0 0h6l-3 4z" fill="#b9bbc1"/></svg>
<div class="a" style="left:0px;top:693px;width:1283px;height:49px;background:#1c1d2c;"></div>
<div class="btn" style="left:23px;top:704px;width:88px"></div>
<div class="btn" style="left:1073px;top:704px;width:88px"></div>
<div class="btn" style="left:1172px;top:704px;width:88px;background:#5c5fee;border-color:#5c5fee"></div>
<div class="a" style="left:416px;top:708px;width:2px;height:18px;background:#555764;"></div>
<div class="a" style="left:565px;top:708px;width:2px;height:18px;background:#555764;"></div>
<div class="a" style="left:675px;top:708px;width:2px;height:18px;background:#555764;"></div>
<div class="a" style="left:787px;top:708px;width:2px;height:18px;background:#555764;"></div>
<svg style="left:333px;top:706px" width="24" height="24" viewBox="0 0 24 24" fill="none"><g stroke="#a4a6ae" stroke-width="1.6" stroke-linecap="round" stroke-linejoin="round"><path d="M21.5 12a10 10 0 1 1-3.3-7.4"/><path d="M18.800000000000001 .8v4.4h-4.4"/></g></svg>
<svg style="left:442px;top:707px" width="21" height="21" viewBox="0 0 21 21" fill="none"><circle cx="10.5" cy="10.5" r="9.6" stroke="#fff" stroke-width="1.5"/><circle cx="10.5" cy="6.5" r="1.1" fill="#fff"/><circle cx="10.5" cy="10.5" r="1.1" fill="#fff"/><circle cx="10.5" cy="14.5" r="1.1" fill="#fff"/></svg>
<svg style="left:530px;top:715px" width="10" height="6" viewBox="0 0 10 6" fill="none"><path d="M0 0h10l-5 5.5z" fill="#fff"/></svg>
<svg style="left:591px;top:705.6px" width="23" height="22" viewBox="0 0 23 22" fill="none"><g stroke="#7f818c" stroke-width="1.6" stroke-linejoin="round"><path d="M5.5 7v-4.5a1.5 1.5 0 0 1 1.5-1.5h9a1.5 1.5 0 0 1 1.5 1.5v4.500000000000001"/><rect x="1" y="7" width="21" height="9.5" rx="2.5"/><rect x="5.5" y="12.5" width="12" height="8.5" rx="1.5" fill="#1c1d2c"/></g></svg>
<svg style="left:647px;top:715px" width="10" height="6" viewBox="0 0 10 6" fill="none"><path d="M0 0h10l-5 5.5z" fill="#7f818c"/></svg>
<svg style="left:695px;top:705.6px" width="19" height="23" viewBox="0 0 19 23" fill="none"><g stroke="#c3c5cc" stroke-width="1.6" stroke-linejoin="round" stroke-linecap="round"><path d="M1 3a2 2 0 0 1 2-2h8.5l6.5 6.5v11.5a2 2 0 0 1-2 2h-13a2 2 0 0 1-2-2z"/><path d="M11 1.5v6h6.5"/><path d="M5 9.8h4M5 13.2h9M5 16.6h9"/></g></svg>
<svg style="left:808px;top:706.4px" width="23" height="23" viewBox="0 0 23 23" fill="none"><g stroke="#c3c5cc" stroke-width="1.6" stroke-linecap="round" stroke-linejoin="round"><path d="M1 5.5h21"/><path d="M7.5 5v-2a2 2 0 0 1 2-2h4a2 2 0 0 1 2 2v2"/><path d="M3.8 5.8l1.4 12.6a2 2 0 0 0 2 1.8h8.6a2 2 0 0 0 2-1.8l1.4-12.6"/><path d="M9.2 9.5v6.5M13.8 9.5v6.5"/></g></svg>
<div class="t b" style="left:26.60px;top:18px;font-size:27px;line-height:35px;transform:scaleX(0.9857);color:#1a1a0e">Thu tiền gửi</div>
<div class="t b" style="left:187.60px;top:18px;font-size:27px;line-height:35px;transform:scaleX(1.0836);color:#1a1a0e">TTG00013</div>
<div class="t b" style="left:42.70px;top:86px;font-size:15px;line-height:20px;transform:scaleX(0.9726);color:#5b5ce6">Thông tin chung</div>
<div class="t b" style="left:909.68px;top:26px;font-size:14px;line-height:18px;transform:scaleX(0.9176);color:#1b74d4">Hướng dẫn</div>
<div class="t b" style="left:1036.05px;top:26px;font-size:14px;line-height:18px;transform:scaleX(0.9500);color:#1b74d4">Phím tắt</div>
<div class="t b" style="left:1201.20px;top:59px;font-size:14px;line-height:18px;transform:scaleX(1.0161);">Tổng tiền</div>
<div class="t b" style="left:1113.76px;top:82px;font-size:26.5px;line-height:34px;transform:scaleX(1.1397);">32.500.000</div>
<div class="t b" style="left:25.60px;top:133px;font-size:14px;line-height:18px;transform:scaleX(0.9397);">Đơn vị nộp</div>
<div class="t b" style="left:25.60px;top:164px;font-size:14px;line-height:18px;transform:scaleX(0.9689);">Địa chỉ</div>
<div class="t b" style="left:24.64px;top:195px;font-size:14px;line-height:18px;transform:scaleX(0.9636);">Nộp vào TK</div>
<div class="t b" style="left:24.63px;top:226px;font-size:14px;line-height:18px;transform:scaleX(0.9719);">Diễn giải</div>
<div class="t b" style="left:992.12px;top:133px;font-size:14px;line-height:18px;transform:scaleX(0.9786);">Ngày CT</div>
<div class="t b" style="left:992.12px;top:164px;font-size:14px;line-height:18px;transform:scaleX(0.9786);">Ngày HT</div>
<div class="t b" style="left:992.17px;top:195px;font-size:14px;line-height:18px;transform:scaleX(0.9275);">Số CT</div>
<div class="t b" style="left:992.16px;top:226px;font-size:14px;line-height:18px;transform:scaleX(0.9392);">Số CKC</div>
<div class="t" style="left:123.45px;top:196px;font-size:13.5px;line-height:18px;transform:scaleX(1.1476);color:#1f2130;-webkit-text-stroke:0.2px currentColor">3711.1.</div>
<div class="t" style="left:383.59px;top:195px;font-size:14px;line-height:18px;transform:scaleX(1.0106);color:#1f2130;-webkit-text-stroke:0.2px currentColor">Phòng Giao dịch số 1 -</div>
<div class="t" style="left:531.72px;top:195px;font-size:14px;line-height:18px;transform:scaleX(0.9778);color:#1f2130;-webkit-text-stroke:0.2px currentColor">Kho bạc Nhà nước Khu vực I</div>
<div class="t" style="left:123.58px;top:226px;font-size:14px;line-height:18px;transform:scaleX(1.0160);color:#1f2130;-webkit-text-stroke:0.2px currentColor">Nhận đặt cọc</div>
<div class="t" style="left:1073.54px;top:134px;font-size:13.5px;line-height:18px;transform:scaleX(1.1636);color:#2a2c44;-webkit-text-stroke:0.2px currentColor">17/04/2025</div>
<div class="t" style="left:1073.54px;top:165px;font-size:13.5px;line-height:18px;transform:scaleX(1.1636);color:#2a2c44;-webkit-text-stroke:0.2px currentColor">17/04/2025</div>
<div class="t" style="left:1075.20px;top:196px;font-size:13.5px;line-height:18px;transform:scaleX(1.0531);color:#2a2c44;-webkit-text-stroke:0.2px currentColor">TTG00013</div>
<div class="t" style="left:18.77px;top:274px;font-size:15px;line-height:20px;transform:scaleX(1.0299);color:#1167c0;text-decoration:underline;text-underline-offset:0.5px;text-decoration-thickness:1.5px;-webkit-text-stroke:0.6px #1167c0">Hạch toán</div>
<div class="t" style="left:111.50px;top:274px;font-size:15px;line-height:20px;transform:scaleX(1.0081);;-webkit-text-stroke:0.2px currentColor">Thống kê</div>
<div class="t" style="left:197.00px;top:274px;font-size:15px;line-height:20px;transform:scaleX(0.9706);;-webkit-text-stroke:0.2px currentColor">Thuế</div>
<div class="t" style="left:873.78px;top:274px;font-size:14px;line-height:18px;transform:scaleX(1.0235);;-webkit-text-stroke:0.2px currentColor">Loại tiền</div>
<div class="t" style="left:953.00px;top:275px;font-size:13.5px;line-height:18px;transform:scaleX(0.9750);;-webkit-text-stroke:0.2px currentColor">VND</div>
<div class="t b" style="left:1108.30px;top:274px;font-size:14px;line-height:18px;transform:scaleX(0.9537);">Định khoản nhanh</div>
<div class="t b" style="left:43.93px;top:315px;font-size:14px;line-height:18px;transform:scaleX(0.9719);">Diễn giải</div>
<div class="t b" style="left:321.50px;top:315px;font-size:14px;line-height:18px;transform:scaleX(0.8953);">TK Nợ</div>
<div class="t b" style="left:431.00px;top:315px;font-size:14px;line-height:18px;transform:scaleX(0.9244);">TK Có</div>
<div class="t b" style="left:589.02px;top:315px;font-size:14px;line-height:18px;transform:scaleX(0.9778);">Số tiền</div>
<div class="t b" style="left:704.11px;top:315px;font-size:14px;line-height:18px;transform:scaleX(0.9907);">Nguồn</div>
<div class="t b" style="left:979.78px;top:315px;font-size:14px;line-height:18px;transform:scaleX(0.9185);">Chương</div>
<div class="t b" style="left:1089.54px;top:315px;font-size:14px;line-height:18px;transform:scaleX(0.9593);">Loại</div>
<div class="t" style="left:28.99px;top:346px;font-size:14px;line-height:18px;transform:scaleX(1.0148);;-webkit-text-stroke:0.2px currentColor">Nhận đặt cọc</div>
<div class="t" style="left:304.12px;top:347px;font-size:13.5px;line-height:18px;transform:scaleX(1.1750);;-webkit-text-stroke:0.2px currentColor">1121</div>
<div class="t" style="left:414.24px;top:347px;font-size:13.5px;line-height:18px;transform:scaleX(1.1571);;-webkit-text-stroke:0.2px currentColor">348</div>
<div class="t" style="left:590.57px;top:347px;font-size:13.5px;line-height:18px;transform:scaleX(1.1258);;-webkit-text-stroke:0.2px currentColor">32.500.000</div>
<div class="t" style="left:688.88px;top:346px;font-size:14px;line-height:18px;transform:scaleX(1.0219);;-webkit-text-stroke:0.2px currentColor">Nguồn khác</div>
<div class="t" style="left:964.34px;top:347px;font-size:13.5px;line-height:18px;transform:scaleX(1.1571);;-webkit-text-stroke:0.2px currentColor">109</div>
<div class="t" style="left:1073.82px;top:347px;font-size:13.5px;line-height:18px;transform:scaleX(1.1810);;-webkit-text-stroke:0.2px currentColor">340</div>
<div class="t" style="left:30.00px;top:444px;font-size:14px;line-height:18px;transform:scaleX(0.9913);;-webkit-text-stroke:0.2px currentColor">Tổng số: <b>1</b> bản ghi</div>
<div class="t b" style="left:593.00px;top:444px;font-size:14px;line-height:18px;transform:scaleX(1.0529);">32.500.000</div>
<div class="t" style="left:18.97px;top:507px;font-size:15px;line-height:20px;transform:scaleX(1.0313);color:#1167c0;text-decoration:underline;text-underline-offset:0.5px;text-decoration-thickness:1.5px;-webkit-text-stroke:0.7px #1167c0">Hạch toán đồng thời</div>
<div class="t b" style="left:1076.65px;top:507px;font-size:14px;line-height:18px;transform:scaleX(0.9452);color:#1b74d4">Cập nhật hạch toán đồng thời</div>
<div class="t b" style="left:43.93px;top:549px;font-size:14px;line-height:18px;transform:scaleX(0.9719);">Diễn giải</div>
<div class="t b" style="left:321.50px;top:549px;font-size:14px;line-height:18px;transform:scaleX(0.8953);">TK Nợ</div>
<div class="t b" style="left:431.00px;top:549px;font-size:14px;line-height:18px;transform:scaleX(0.9244);">TK Có</div>
<div class="t b" style="left:589.02px;top:549px;font-size:14px;line-height:18px;transform:scaleX(0.9778);">Số tiền</div>
<div class="t b" style="left:704.11px;top:549px;font-size:14px;line-height:18px;transform:scaleX(0.9907);">Nguồn</div>
<div class="t b" style="left:979.78px;top:548px;font-size:14px;line-height:18px;transform:scaleX(0.9185);">Chương</div>
<div class="t b" style="left:1089.32px;top:548px;font-size:14px;line-height:18px;transform:scaleX(0.9810);">Khoản</div>
<div class="t" style="left:30.00px;top:651px;font-size:14px;line-height:18px;transform:scaleX(0.9913);;-webkit-text-stroke:0.2px currentColor">Tổng số: <b>0</b> bản ghi</div>
<div class="t b" style="left:49.80px;top:707px;font-size:14px;line-height:18px;transform:scaleX(0.9771);color:#fff">Đóng</div>
<div class="t b" style="left:364.19px;top:707px;font-size:14px;line-height:18px;transform:scaleX(1.0120);color:#bcbec6">Nạp</div>
<div class="t b" style="left:473.90px;top:707px;font-size:14px;line-height:18px;transform:scaleX(0.9442);color:#fff">Tiện ích</div>
<div class="t b" style="left:621.04px;top:707px;font-size:14px;line-height:18px;transform:scaleX(1.0636);color:#80828d">In</div>
<div class="t b" style="left:724.03px;top:707px;font-size:14px;line-height:18px;transform:scaleX(0.9711);color:#c3c5cc">Duyệt</div>
<div class="t b" style="left:839.50px;top:707px;font-size:14px;line-height:18px;transform:scaleX(0.9462);color:#c3c5cc">Xóa</div>
<div class="t b" style="left:1099.49px;top:707px;font-size:14px;line-height:18px;transform:scaleX(1.0121);color:#fff">Hoãn</div>
<div class="t b" style="left:1204.31px;top:707px;font-size:14px;line-height:18px;transform:scaleX(0.9909);color:#fff">Cất</div>
<div class="a" style="left:1px;top:1px;width:1281px;height:1px;background:#fff;"></div>
<div class="a" style="left:1281px;top:1px;width:1px;height:692px;background:#fff;"></div>
<div class="a" style="left:1px;top:1px;width:1px;height:692px;background:#fff;"></div>
<div class="a" style="left:0px;top:0px;width:1283px;height:1px;background:#4f4d4b;"></div>
<div class="a" style="left:0px;top:0px;width:1px;height:742px;background:#4f4d4b;"></div>
<div class="a" style="left:1282px;top:0px;width:1px;height:693px;background:#4f4d4b;"></div>
<div class="a" style="left:1282px;top:693px;width:1px;height:49px;background:#6a6866;"></div>
<div class="a" style="left:0px;top:741px;width:1283px;height:1px;background:#6a6866;"></div>
</body>
</html>
